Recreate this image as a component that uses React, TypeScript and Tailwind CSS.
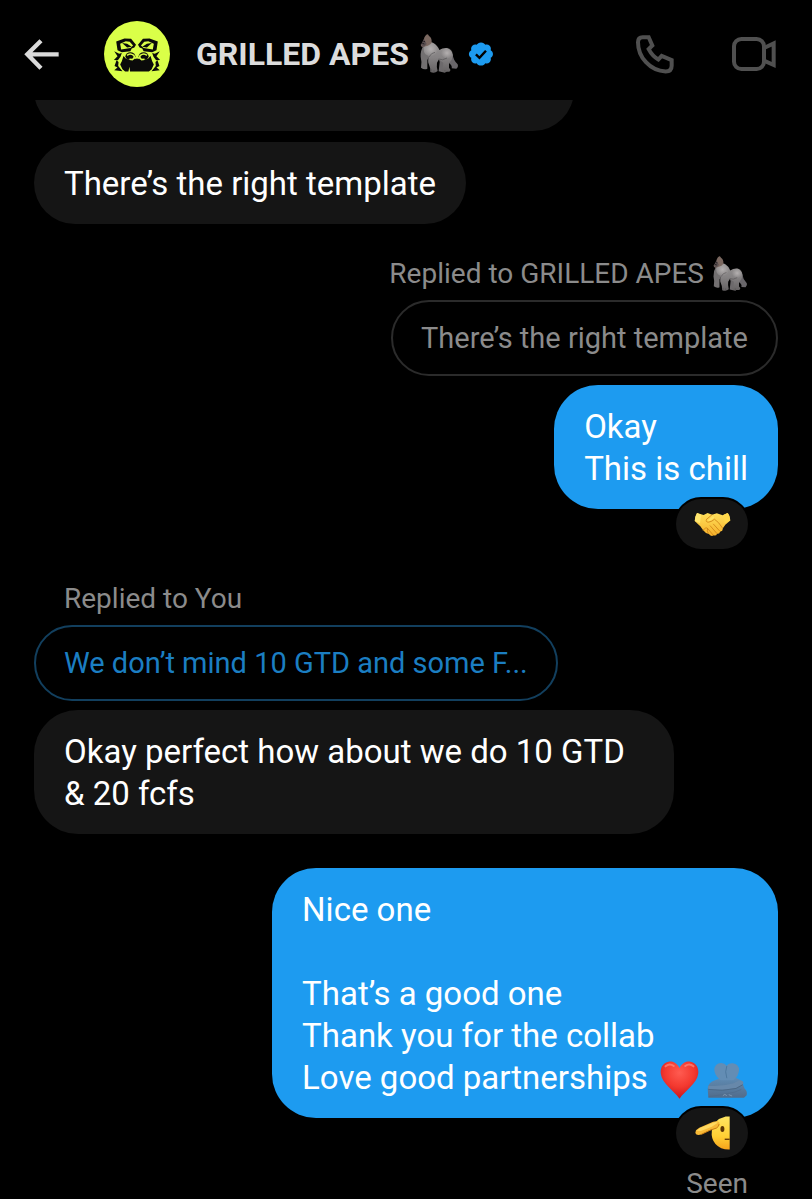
import React from 'react';
import clsx from 'clsx';

interface IconProps {
  className?: string;
}

function BackIcon({ className }: IconProps) {
  return (
    <svg viewBox="0 0 105 93" fill="none" stroke="currentColor" strokeWidth="13" className={className} aria-hidden="true">
      <path d="M51 5 L10 46 L51 88 M10 46 H104" />
    </svg>
  );
}

function PhoneIcon({ className }: IconProps) {
  return (
    <svg viewBox="0 0 114 116" fill="none" stroke="currentColor" strokeWidth="12" className={className} aria-hidden="true">
      <path d="M20 6 H38 L49 31 L38 42 Q49 63 67 73 L77 62 L107 75 V92 Q107 109 89 109 C42 107 6 66 6 21 Q6 6 20 6 Z" />
    </svg>
  );
}

function VideoIcon({ className }: IconProps) {
  return (
    <svg viewBox="0 0 132 102" fill="none" stroke="currentColor" strokeWidth="12" className={className} aria-hidden="true">
      <rect x="6" y="6" width="90" height="90" rx="22" />
      <path d="M96 33 L125 19 V84 L96 71" />
    </svg>
  );
}

function VerifiedIcon({ className }: IconProps) {
  return (
    <svg viewBox="0 0 22 22" className={className} role="img" aria-label="Verified">
      <path
        fill="#1d9bf0"
        d="M20.4 11c0-1.3-.7-2.400-1.800-3 .4-1.200.1-2.500-.8-3.400s-2.200-1.200-3.400-.8c-.6-1.100-1.700-1.900-3.400-1.900s-2.700.8-3.400 1.900c-1.200-.4-2.500-.1-3.400.8s-1.200 2.200-.8 3.400c-1.100.6-1.900 1.700-1.900 3s.7 2.400 1.900 3c-.4 1.200-.1 2.500.8 3.400s2.200 1.200 3.400.8c.6 1.100 1.800 1.900 3.400 1.900s2.700-.7 3.400-1.900c1.200.4 2.500.1 3.400-.8s1.200-2.200.8-3.400c1.100-.6 1.800-1.700 1.800-3z"
      />
      <path d="M7 11.300 L9.800 14 L14.900 8.400" fill="none" stroke="#000" strokeWidth="1.900" />
    </svg>
  );
}

function ApeFaceHalf() {
  return (
    <>
      <path d="M37 62 L62 53 L82 54 L97 72 L92 80 L84 83 L80 92 L54 95 L41 89 Z" fill="#0a0a0a" />
      <path d="M49 69 L66 61 L78 63 L88 74 L80 82 L52 86 Z" fill="#daff48" />
      <path d="M55 67 L70 69 L84 78 L70 80 Z" fill="#0a0a0a" />
      <path d="M31 92 L46 99 L54 97 L50 108 L42 119 L30 118 L41 107 Z" fill="#0a0a0a" />
      <path d="M38 119 L44 124 L43 136 L56 152 L31 149 L41 141 L32 136 Z" fill="#0a0a0a" />
    </>
  );
}

function ApeAvatar({ className }: IconProps) {
  return (
    <svg viewBox="0 0 200 200" className={className} role="img" aria-label="GRILLED APES">
      <circle cx="100" cy="100" r="100" fill="#daff48" />
      <ApeFaceHalf />
      <g transform="translate(200 0) scale(-1 1)">
        <ApeFaceHalf />
      </g>
      <path
        d="M59 106 L66 114 L78 118 L100 114 L122 118 L134 114 L141 106 L146 122 L151 132 L144 147 L136 153 H79 L77 139 L74 153 H64 L56 146 L49 132 L54 122 Z"
        fill="#0a0a0a"
      />
      <ellipse cx="80" cy="107" rx="15" ry="12" fill="#0a0a0a" />
      <ellipse cx="120" cy="107" rx="15" ry="12" fill="#0a0a0a" />
      <g fill="none" stroke="#daff48" strokeWidth="5">
        <path d="M70 104 Q79 96 90 104 Q95 111 86 117 L77 116" />
        <path d="M130 104 Q121 96 110 104 Q105 111 114 117 L123 116" />
      </g>
    </svg>
  );
}

function Gorilla({ className }: IconProps) {
  return (
    <svg viewBox="0 0 120 120" className={className} role="img" aria-label="gorilla">
      <defs>
        <linearGradient id="fur" x1="0" y1="0" x2="0" y2="1">
          <stop offset="0" stopColor="#969393" />
          <stop offset="0.5" stopColor="#858283" />
          <stop offset="1" stopColor="#646162" />
        </linearGradient>
        <radialGradient id="furLight">
          <stop offset="0" stopColor="#b4b0b0" />
          <stop offset="1" stopColor="#b4b0b0" stopOpacity="0" />
        </radialGradient>
      </defs>
      <path d="M84 62 L101 62 Q103 78 116 91 Q119 99 112 104 L98 103 Q101 94 88 86 Z" fill="#69666a" />
      <path d="M14 34 Q4 50 5 68 Q9 82 6 101 Q16 109 25 104 L25 78 L34 62 Z" fill="#737071" />
      <path d="M56 62 L62 84 L59 112 L78 116 L84 111 L82 86 L80 62 Z" fill="#6c696b" />
      <path
        d="M15 30 Q29 20 43 27 Q57 36 61 48 Q71 41 84 42 Q99 46 102 63 Q100 78 90 88 L90 102 Q98 108 91 113 L70 113 Q64 106 72 100 L73 86 Q66 83 60 76 L54 86 Q52 98 56 111 Q47 119 34 114 Q35 101 29 89 Q25 82 29 66 Q14 62 14 45 Z"
        fill="url(#fur)"
      />
      <ellipse cx="35" cy="45" rx="22" ry="22" fill="url(#furLight)" />
      <ellipse cx="84" cy="57" rx="18" ry="17" fill="url(#furLight)" />
      <path d="M14 27 Q13 8 24 1 Q28 0 30 6 Q39 11 38 26 Q34 33 20 37 Q6 43 5 32 Z" fill="#7b6860" />
      <path d="M7 30 L15 14 L18 20 L23 30 L17 37 Q7 41 7 30" fill="#5c5152" />
      <path d="M10 28 L16 30 M13 22 L18 23" stroke="#231e20" strokeWidth="3" />
      <path d="M30 69 Q37 56 48 55 M28 70 V87 M59 75 Q70 81 84 72 M37 112 V106 M45 115 V108 M78 113 V108" fill="none" stroke="#555354" strokeWidth="2" />
    </svg>
  );
}

function Handshake({ className }: IconProps) {
  return (
    <svg viewBox="0 0 110 76" className={className} role="img" aria-label="handshake">
      <defs>
        <linearGradient id="skin" x1="0" y1="0" x2="0" y2="1">
          <stop offset="0" stopColor="#ffe05a" />
          <stop offset="1" stopColor="#f6b02a" />
        </linearGradient>
      </defs>
      <path
        d="M8 3 Q1 14 1 27 Q10 36 18 43 L26 55 Q33 65 44 67 Q52 77 58 71 Q66 74 69 66 Q77 68 78 59 Q87 60 86 50 L94 39 L109 26 Q108 10 101 3 L86 10 L68 4 L54 8 L40 3 L28 9 Z"
        fill="url(#skin)"
      />
      <path d="M8 3 L20 8 L17 34 L1 27 Q2 12 8 3 Z" fill="#ffe66f" />
      <path d="M101 3 L89 8 L92 34 L109 26 Q108 11 101 3 Z" fill="#ffd84b" />
      <path
        d="M54 8 L37 22 Q33 31 43 31 Q54 29 61 22 Q73 29 85 48 M58 37 L77 58 M48 42 L68 65 M39 49 L57 70 M27 55 Q35 44 40 51 Q37 57 42 64"
        fill="none"
        stroke="#cf8316"
        strokeWidth="2.500"
        strokeLinecap="round"
      />
      <path d="M57 13 L43 23 Q39 28 46 27 Q54 24 61 17" fill="#ffe467" />
    </svg>
  );
}

function Heart({ className }: IconProps) {
  return (
    <svg viewBox="0 0 116 114" className={className} role="img" aria-label="red heart">
      <defs>
        <radialGradient id="heart" cx="0.5" cy="0.3" r="0.7">
          <stop offset="0" stopColor="#ff5b51" />
          <stop offset="0.55" stopColor="#f3392f" />
          <stop offset="1" stopColor="#c9141d" />
        </radialGradient>
      </defs>
      <path d="M58 21 C66 5 80 0 91 2 C107 5 117 20 114 39 C110 68 76 88 58 113 C40 88 6 68 2 39 C-1 20 9 5 25 2 C36 0 50 5 58 21 Z" fill="url(#heart)" />
      <path d="M16 16 Q28 5 41 15 M75 15 Q88 5 100 16" fill="none" stroke="#ff9b8e" strokeWidth="6" strokeLinecap="round" opacity=".6" />
    </svg>
  );
}

function Hug({ className }: IconProps) {
  return (
    <svg viewBox="0 0 124 106" className={className} role="img" aria-label="people hugging">
      <defs>
        <linearGradient id="hug" x1="0" y1="0" x2="0" y2="1">
          <stop offset="0" stopColor="#5f8bb3" />
          <stop offset="1" stopColor="#526c8b" />
        </linearGradient>
      </defs>
      <path d="M4 105 L2 78 Q4 58 22 53 L40 46 L84 44 Q102 48 108 63 L114 78 Q123 84 120 98 L112 105 Z" fill="url(#hug)" />
      <path d="M41 52 Q22 38 22 20 Q24 0 43 0 Q54 0 59 8 Q66 0 78 1 Q97 4 97 22 Q95 41 80 52 Z" fill="#638db4" />
      <path d="M60 9 Q53 26 60 46" fill="none" stroke="#4d779e" strokeWidth="3" />
      <path d="M3 69 Q40 73 80 61 L98 52 Q112 52 110 63 L88 76 Q47 84 4 79" fill="#6788aa" />
      <path d="M4 80 Q47 87 88 77 L108 66" fill="none" stroke="#4c6886" strokeWidth="3" />
      <path d="M5 102 Q46 97 84 88 L104 80" fill="none" stroke="#4f6a88" strokeWidth="2" />
      <path d="M48 99 q6 -8 12 0 M66 96 l10 4" fill="none" stroke="#8fa9c2" strokeWidth="2" />
    </svg>
  );
}

function Salute({ className }: IconProps) {
  return (
    <svg viewBox="0 0 106 102" className={className} role="img" aria-label="saluting face">
      <defs>
        <linearGradient id="face" x1="0" y1="0" x2="0" y2="1">
          <stop offset="0" stopColor="#ffe562" />
          <stop offset="0.6" stopColor="#ffd034" />
          <stop offset="1" stopColor="#f5a21b" />
        </linearGradient>
      </defs>
      <path d="M105 1 V101 Q78 102 62 84 Q48 68 51 45 Q56 10 93 1 Z" fill="url(#face)" />
      <path d="M3 43 L13 35 L55 17 Q68 13 74 19 Q76 30 64 37 L46 42 L21 55 Q4 61 1 51 Z" fill="#f8b936" />
      <path d="M5 44 L15 36 L57 19 Q65 16 69 20 L51 32 L18 45 Z" fill="#ffd961" />
      <path d="M19 55 L45 43 L65 36 Q73 31 73 24" fill="none" stroke="#c97b13" strokeWidth="3" />
      <ellipse cx="83" cy="39" rx="6" ry="9" fill="#5b3506" />
      <path d="M90 70 H105" stroke="#5b3506" strokeWidth="4" />
    </svg>
  );
}

function RepliedTo({ children }: { children: React.ReactNode }) {
  return (
    <p className="mb-2.5 flex h-8 items-center gap-2 px-[30px] text-[28px] leading-8 text-[#8b8b8b]">{children}</p>
  );
}

function Quote({ mine, children }: { mine?: boolean; children: React.ReactNode }) {
  return (
    <div
      className={clsx(
        'mb-[9px] max-w-full truncate rounded-[38px] border-2 px-7 py-4 text-[29px] leading-10',
        mine ? 'border-[#123f5e] text-[#1b7ec2]' : 'border-[#2b2b2b] text-[#8b8b8b]',
      )}
    >
      {children}
    </div>
  );
}

function Bubble({ mine, children }: { mine?: boolean; children: React.ReactNode }) {
  return (
    <div
      className={clsx(
        'max-w-[86%] whitespace-pre-line rounded-[44px] px-[30px] pt-[21px] pb-[19px] text-[33px] leading-[42px] text-white',
        mine ? 'bg-[#1d9bf0]' : 'bg-[#151515]',
      )}
    >
      {children}
    </div>
  );
}

function Reaction({ children }: { children: React.ReactNode }) {
  return (
    <button
      type="button"
      className="relative -mt-2.5 mr-[30px] flex h-[50px] w-[72px] items-center justify-center rounded-full bg-[#151515] ring-2 ring-black"
    >
      {children}
    </button>
  );
}

export default function App() {
  return (
    <div className="flex h-screen flex-col overflow-hidden bg-black font-[Roboto,sans-serif] text-white">
      {/* Header */}
      <header className="flex h-[100px] shrink-0 items-center pt-2 pr-9 pl-6">
        <button type="button" aria-label="Back" className="text-[#dadada]">
          <BackIcon className="h-[31px] w-[35px]" />
        </button>
        <ApeAvatar className="ml-[45px] size-[66px]" />
        <h1 className="ml-[26px] text-[32px] font-bold text-[#dcdcdc]">GRILLED APES</h1>
        <Gorilla className="ml-2.5 size-10" />
        <VerifiedIcon className="ml-2 size-7" />
        <div className="ml-auto flex items-center gap-[58px] text-[#505050]">
          <button type="button" aria-label="Audio call">
            <PhoneIcon className="h-[39px] w-[38px]" />
          </button>
          <button type="button" aria-label="Video call">
            <VideoIcon className="h-[34px] w-11" />
          </button>
        </div>
      </header>

      {/* Conversation */}
      <main className="flex flex-1 flex-col gap-[34px] overflow-hidden px-[34px]">
        <section className="flex flex-col items-start gap-[11px]">
          <div className="-mt-[51px] h-[82px] w-[540px] max-w-full shrink-0 rounded-[41px] bg-[#151515]" />
          <Bubble>There’s the right template</Bubble>
        </section>

        <section className="flex flex-col items-end">
          <RepliedTo>
            Replied to GRILLED APES
            <Gorilla className="size-9" />
          </RepliedTo>
          <Quote>There’s the right template</Quote>
          <Bubble mine>{'Okay\nThis is chill'}</Bubble>
          <Reaction>
            <Handshake className="h-[25px] w-[37px]" />
          </Reaction>
        </section>

        <section className="flex flex-col items-start">
          <RepliedTo>Replied to You</RepliedTo>
          <Quote mine>We don’t mind 10 GTD and some F...</Quote>
          <Bubble>Okay perfect how about we do 10 GTD &amp; 20 fcfs</Bubble>
        </section>

        <section className="flex flex-col items-end">
          <Bubble mine>
            {'Nice one\n\nThat’s a good one\nThank you for the collab\nLove good partnerships '}
            <Heart className="ml-1 inline h-[38px] w-[39px] align-middle" />
            <Hug className="ml-2 inline h-[35px] w-[41px] align-middle" />
          </Bubble>
          <Reaction>
            <Salute className="h-[34px] w-[35px]" />
          </Reaction>
          <p className="mt-2.5 px-[30px] text-[28px] leading-8 text-[#8b8b8b]">Seen</p>
        </section>
      </main>
    </div>
  );
}
